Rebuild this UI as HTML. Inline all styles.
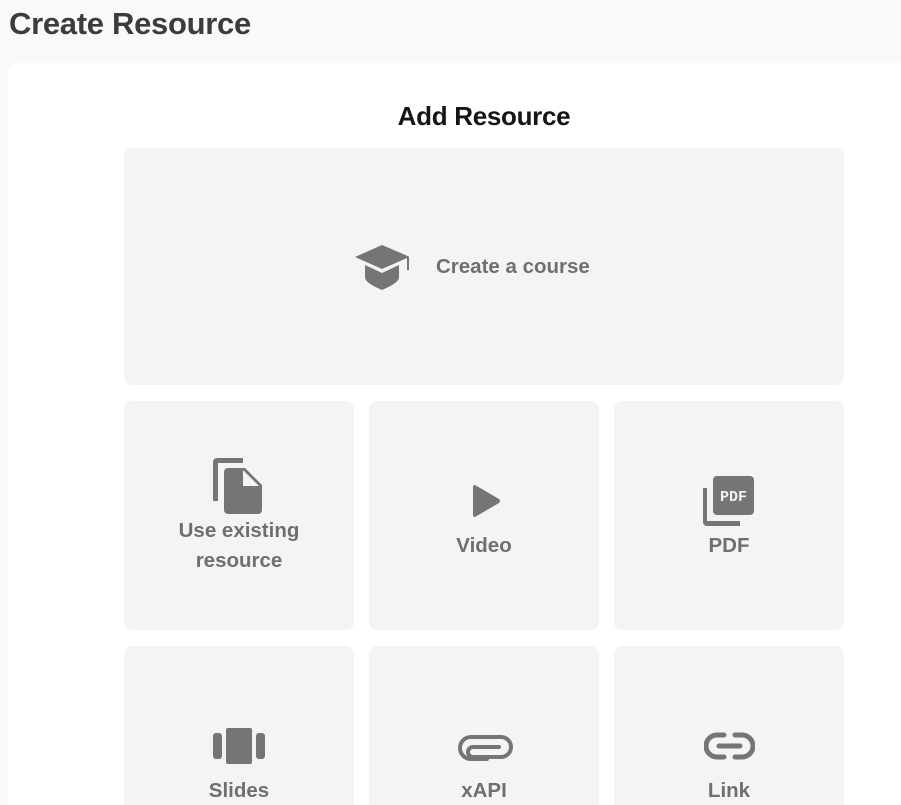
<!DOCTYPE html>
<html style="overflow:hidden;height:805px"><head><style>
body{margin:0;width:901px;height:805px;overflow:hidden;background:#f9f9f9;font-family:"Liberation Sans",sans-serif;position:relative}
h1{position:absolute;left:9px;top:6px;margin:0;font-size:31px;font-weight:700;color:#3c3c3c;letter-spacing:-0.3px}
.panel{position:absolute;left:8px;top:63px;width:893px;height:742px;background:#fff;border-radius:10px 0 0 0}
h2{position:absolute;left:0;width:968px;top:101px;margin:0;text-align:center;font-size:26px;color:#161616;font-weight:700;letter-spacing:-0.3px}
.card{position:absolute;background:#f4f4f4;border-radius:8px;color:#6f6f6f;font-weight:700;font-size:20.5px;text-align:center}
.card svg{position:absolute;fill:#757575}
.lbl{position:absolute;left:0;right:0;line-height:30px}
</style></head><body>
<h1>Create Resource</h1>
<div class="panel"></div>
<h2>Add Resource</h2>
<div class="card" style="left:124px;top:148px;width:720px;height:237px">
<svg style="left:231px;top:97px" width="54" height="45" viewBox="0 0 54 45"><path d="M27 0L0 12l27 12 25-11v12h3V12z"/><path d="M10 20v12c0 5 8 9 17 13 9-4 17-8 17-13V20L27 28z"/></svg>
<div class="lbl" style="left:312px;right:auto;top:104px">Create a course</div>
</div>
<div class="card" style="left:124px;top:401px;width:230px;height:229px">
<svg style="left:89px;top:57px" width="50" height="56" viewBox="0 0 50 56"><path d="M0 4a4 4 0 0 1 4-4h26v5H5v38H0z"/><path d="M11 14a4 4 0 0 1 4-4h17l17 17v25a4 4 0 0 1-4 4H15a4 4 0 0 1-4-4z"/><path d="M30 12v16h16z" fill="#f4f4f4"/></svg>
<div class="lbl" style="top:115px">Use existing<br>resource</div>
</div>
<div class="card" style="left:369px;top:401px;width:230px;height:229px">
<svg style="left:104px;top:84px" width="28" height="32" viewBox="0 0 28 32"><path d="M2 0l24 14q2 2 0 4L2 32Q0 32 0 30V2Q0 0 2 0z"/></svg>
<div class="lbl" style="top:130px">Video</div>
</div>
<div class="card" style="left:614px;top:401px;width:230px;height:229px">
<svg style="left:89px;top:75px" width="51" height="51" viewBox="0 0 51 51"><path d="M0 12h4v33h33v5H4a4 4 0 0 1-4-4z"/><rect x="10" y="0" width="41" height="39" rx="4"/><text x="30.5" y="25" font-size="15" font-weight="700" text-anchor="middle" fill="#f4f4f4" font-family="Liberation Mono,monospace">PDF</text></svg>
<div class="lbl" style="top:130px">PDF</div>
</div>
<div class="card" style="left:124px;top:646px;width:230px;height:170px">
<svg style="left:89px;top:82px" width="52" height="36" viewBox="0 0 52 36"><rect x="0" y="5" width="9" height="26" rx="3"/><rect x="13" y="0" width="26" height="36" rx="2"/><rect x="43" y="5" width="9" height="26" rx="3"/></svg>
<div class="lbl" style="top:130px">Slides</div>
</div>
<div class="card" style="left:369px;top:646px;width:230px;height:170px">
<svg style="left:88px;top:86px" width="58" height="30" viewBox="0 0 58 30"><path d="M30 27H14a11 11 0 0 1 0-22h30a10 10 0 0 1 0 20H16a5 5 0 0 1 0-10h26" fill="none" stroke="#757575" stroke-width="4" stroke-linecap="round"/></svg>
<div class="lbl" style="top:130px">xAPI</div>
</div>
<div class="card" style="left:614px;top:646px;width:230px;height:170px">
<svg style="left:90px;top:86px" width="51" height="28" viewBox="0 0 51 28"><path d="M20 3H13a11 11 0 0 0 0 22h7M31 3h7a11 11 0 0 1 0 22h-7M15 14h21" fill="none" stroke="#757575" stroke-width="5" stroke-linecap="round"/></svg>
<div class="lbl" style="top:130px">Link</div>
</div>
</body></html>
